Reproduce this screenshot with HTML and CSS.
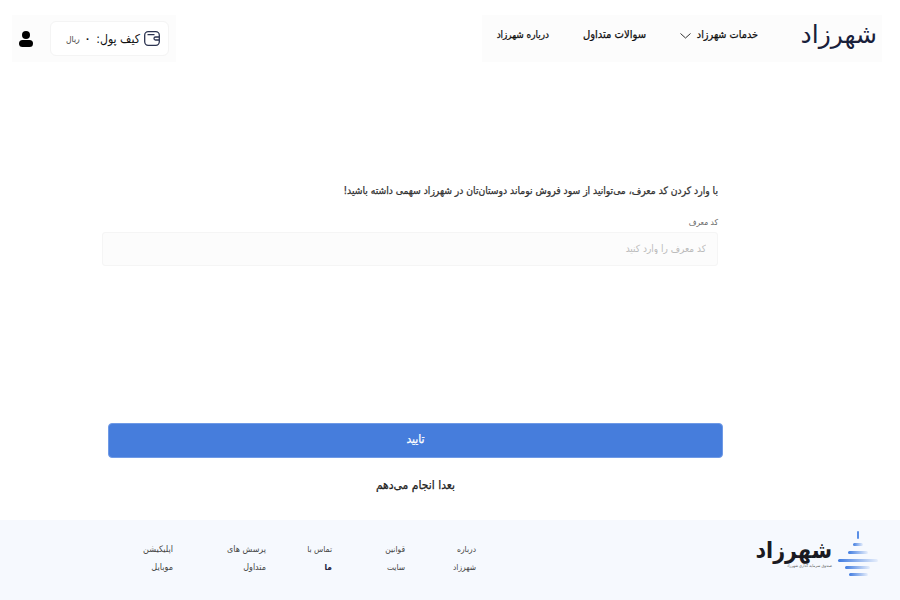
FILE: index.html
```html
<!DOCTYPE html>
<html lang="fa" dir="rtl">
<head>
    <meta charset="UTF-8">
    <meta name="viewport" content="width=device-width, initial-scale=1.0">
    <title>شهرزاد</title>
    <link rel="stylesheet" href="styles.css">
</head>
<body>
    <header class="top-bar">
        <nav class="main-nav">
            <a class="logo" href="#">شهرزاد</a>
            <a class="nav-link nav-services" href="#">خدمات شهرزاد
                <svg class="chevron" width="11" height="6" viewBox="0 0 11 6" fill="none" stroke="#333" stroke-width="1"><path d="M.5.5l5 4.5 5-4.5"/></svg>
            </a>
            <a class="nav-link nav-faq" href="#">سوالات متداول</a>
            <a class="nav-link nav-about" href="#">درباره شهرزاد</a>
        </nav>
        <div class="user-box">
            <div class="wallet">
                <svg class="wallet-icon" width="16" height="15" viewBox="0 0 16 15" fill="none" stroke="#2b3350" stroke-width="1.3">
                    <rect x=".7" y=".7" width="14.6" height="13.6" rx="3.5"/>
                    <path d="M3.5 3.6h7M15 6h-3.5a1.5 1.5 0 0 0 0 3H15"/>
                </svg>
                <span class="wallet-label">کیف پول:</span>
                <span class="wallet-amount">۰</span>
                <span class="wallet-unit">ریال</span>
            </div>
            <svg class="user-icon" width="14" height="16" viewBox="0 0 14 16" fill="#000">
                <circle cx="7" cy="4" r="4"/>
                <rect x="0" y="9" width="14" height="7" rx="3.5"/>
            </svg>
        </div>
    </header>

    <main class="content">
        <form class="referral-form">
            <p class="intro">با وارد کردن کد معرف، می‌توانید از سود فروش نوماند دوستان‌تان در شهرزاد سهمی داشته باشید!</p>
            <label class="field-label" for="ref-code">کد معرف</label>
            <input class="field-input" id="ref-code" type="text" placeholder="کد معرف را وارد کنید">
            <button class="submit-button" type="button">تایید</button>
            <a class="later-link" href="#">بعدا انجام می‌دهم</a>
        </form>
    </main>

    <footer class="site-footer">
        <div class="footer-logo">
            <svg width="42" height="46" viewBox="0 0 42 46">
                <defs>
                    <linearGradient id="fade" x1="0" x2="1" y1="0" y2="0">
                        <stop offset="0" stop-color="#3f7be0"/>
                        <stop offset="1" stop-color="#3f7be0" stop-opacity=".08"/>
                    </linearGradient>
                </defs>
                <rect x="21" y="0" width="2" height="8" rx="1" fill="#5a8fe6"/>
                <rect x="17" y="12" width="10" height="3" rx="1.5" fill="url(#fade)"/>
                <rect x="12" y="20" width="20" height="3" rx="1.5" fill="url(#fade)"/>
                <rect x="2" y="28" width="40" height="3" rx="1.5" fill="url(#fade)"/>
                <rect x="9" y="35" width="25" height="3" rx="1.5" fill="url(#fade)"/>
                <rect x="13" y="42" width="19" height="3" rx="1.5" fill="url(#fade)"/>
            </svg>
            <div class="footer-brand">
                <span class="footer-name">شهرزاد</span>
                <span class="footer-tag">صندوق سرمایه گذاری شهرزاد</span>
            </div>
        </div>
        <ul class="footer-links">
            <li class="col-about"><a href="#">درباره<br>شهرزاد</a></li>
            <li class="col-rules"><a href="#">قوانین<br>سایت</a></li>
            <li class="col-contact"><a href="#">تماس با<br><b>ما</b></a></li>
            <li class="col-faq"><a href="#">پرسش های<br>متداول</a></li>
            <li class="col-app"><a href="#">اپلیکیشن<br>موبایل</a></li>
        </ul>
    </footer>
</body>
</html>
```

FILE: styles.css
```css
* {
    box-sizing: border-box;
}
html, body {
    margin: 0;
    padding: 0;
}
body {
    width: 900px;
    height: 600px;
    overflow: hidden;
    display: flex;
    flex-direction: column;
    font-family: "DejaVu Sans", "Noto Sans", sans-serif;
    font-stretch: condensed;
    background-color: #fff;
    color: #111;
}
a {
    color: inherit;
    text-decoration: none;
}

/* header */
.top-bar {
    display: flex;
    justify-content: space-between;
    align-items: flex-start;
    height: 62px;
    padding: 15px 18px 0 0;
    margin-left: 12px;
}
.main-nav {
    width: 400px;
    height: 47px;
    background-color: #fcfcfc;
    display: flex;
    align-items: center;
    padding: 0 5px 8px 0;
    font-size: 10.8px;
    -webkit-text-stroke: .25px #111;
}
.logo {
    width: 77px;
    margin-left: 42px;
    font-size: 25px;
    font-stretch: normal;
    line-height: 1;
    color: #18203a;
    -webkit-text-stroke: 0;
}
.nav-link {
    white-space: nowrap;
    display: flex;
    align-items: center;
}
.nav-services {
    width: 78px;
    gap: 6px;
    margin-left: 34px;
}
.nav-faq {
    width: 63px;
    margin-left: 34px;
    font-size: 11.1px;
}
.nav-about {
    font-size: 9.9px;
}
.chevron {
    margin-top: 2px;
    flex: none;
}
.user-box {
    width: 164px;
    height: 47px;
    background-color: #fcfcfc;
    display: flex;
    align-items: center;
    justify-content: space-between;
    padding: 0 7px;
}
.wallet {
    width: 119px;
    height: 35px;
    background-color: #fff;
    border: 1px solid #f4f4f4;
    border-radius: 6px;
    display: flex;
    align-items: center;
    padding-right: 8px;
    white-space: nowrap;
}
.wallet-icon {
    flex: none;
}
.wallet-label {
    font-size: 12.2px;
    margin-right: 4px;
}
.wallet-amount {
    font-size: 10px;
    font-weight: 700;
    margin-right: 6px;
}
.wallet-unit {
    font-size: 8.5px;
    color: #444;
    margin-right: 5px;
}

/* form */
.content {
    flex: 1;
    min-height: 0;
}
.referral-form {
    width: 640px;
    margin-right: 177px;
    display: flex;
    flex-direction: column;
    align-items: flex-start;
}
.intro {
    margin: 120px 5px 0 0;
    font-size: 10.25px;
    line-height: 16px;
    color: #333;
    white-space: nowrap;
    -webkit-text-stroke: .25px #333;
}
.field-label {
    margin: 19px 5px 0 0;
    font-size: 8.3px;
    line-height: 10px;
    color: #666;
}
.field-input {
    width: 616px;
    height: 34px;
    margin: 5px 5px 0 0;
    padding: 0 11px 2px;
    background-color: #fcfcfc;
    border: 1px solid #f5f5f5;
    border-radius: 3px;
    font-family: inherit;
    font-stretch: inherit;
    font-size: 10px;
    color: #333;
}
.field-input::placeholder {
    color: #bbb;
}
.submit-button {
    width: 615px;
    height: 35px;
    margin: 157px 0 0 0;
    padding-bottom: 4px;
    background-color: #467ddc;
    border: 1px solid #6f9ae6;
    border-radius: 4px;
    color: #fff;
    font-family: inherit;
    font-stretch: inherit;
    font-size: 12px;
    -webkit-text-stroke: .25px #fff;
}
.later-link {
    width: 615px;
    margin-top: 19px;
    text-align: center;
    font-size: 12px;
    line-height: 16px;
    color: #222;
    -webkit-text-stroke: .25px #222;
}

/* footer */
.site-footer {
    height: 80px;
    background-color: #f6f9fe;
    display: flex;
    flex: none;
    padding-top: 11px;
}
.footer-logo {
    display: flex;
    align-items: flex-start;
    width: 145px;
    margin-right: 22px;
    gap: 4px;
}
.footer-logo svg {
    flex: none;
}
.footer-brand {
    display: flex;
    flex-direction: column;
    margin-top: 6px;
}
.footer-name {
    font-size: 23px;
    line-height: 26px;
    font-weight: 700;
    color: #1a1a22;
}
.footer-tag {
    font-size: 4px;
    line-height: 5px;
    color: #555;
    white-space: nowrap;
}
.footer-links {
    list-style: none;
    margin: 9px 257px 0 0;
    padding: 0;
    display: flex;
    font-size: 8.4px;
    line-height: 18px;
    color: #444;
}
.footer-links b {
    color: #1a1a40;
}
.col-about { width: 71px; }
.col-rules { width: 73px; }
.col-contact { width: 66px; }
.col-faq { width: 93px; font-size: 8.9px; }
.col-app { width: 40px; white-space: nowrap; font-size: 9px; }
```
